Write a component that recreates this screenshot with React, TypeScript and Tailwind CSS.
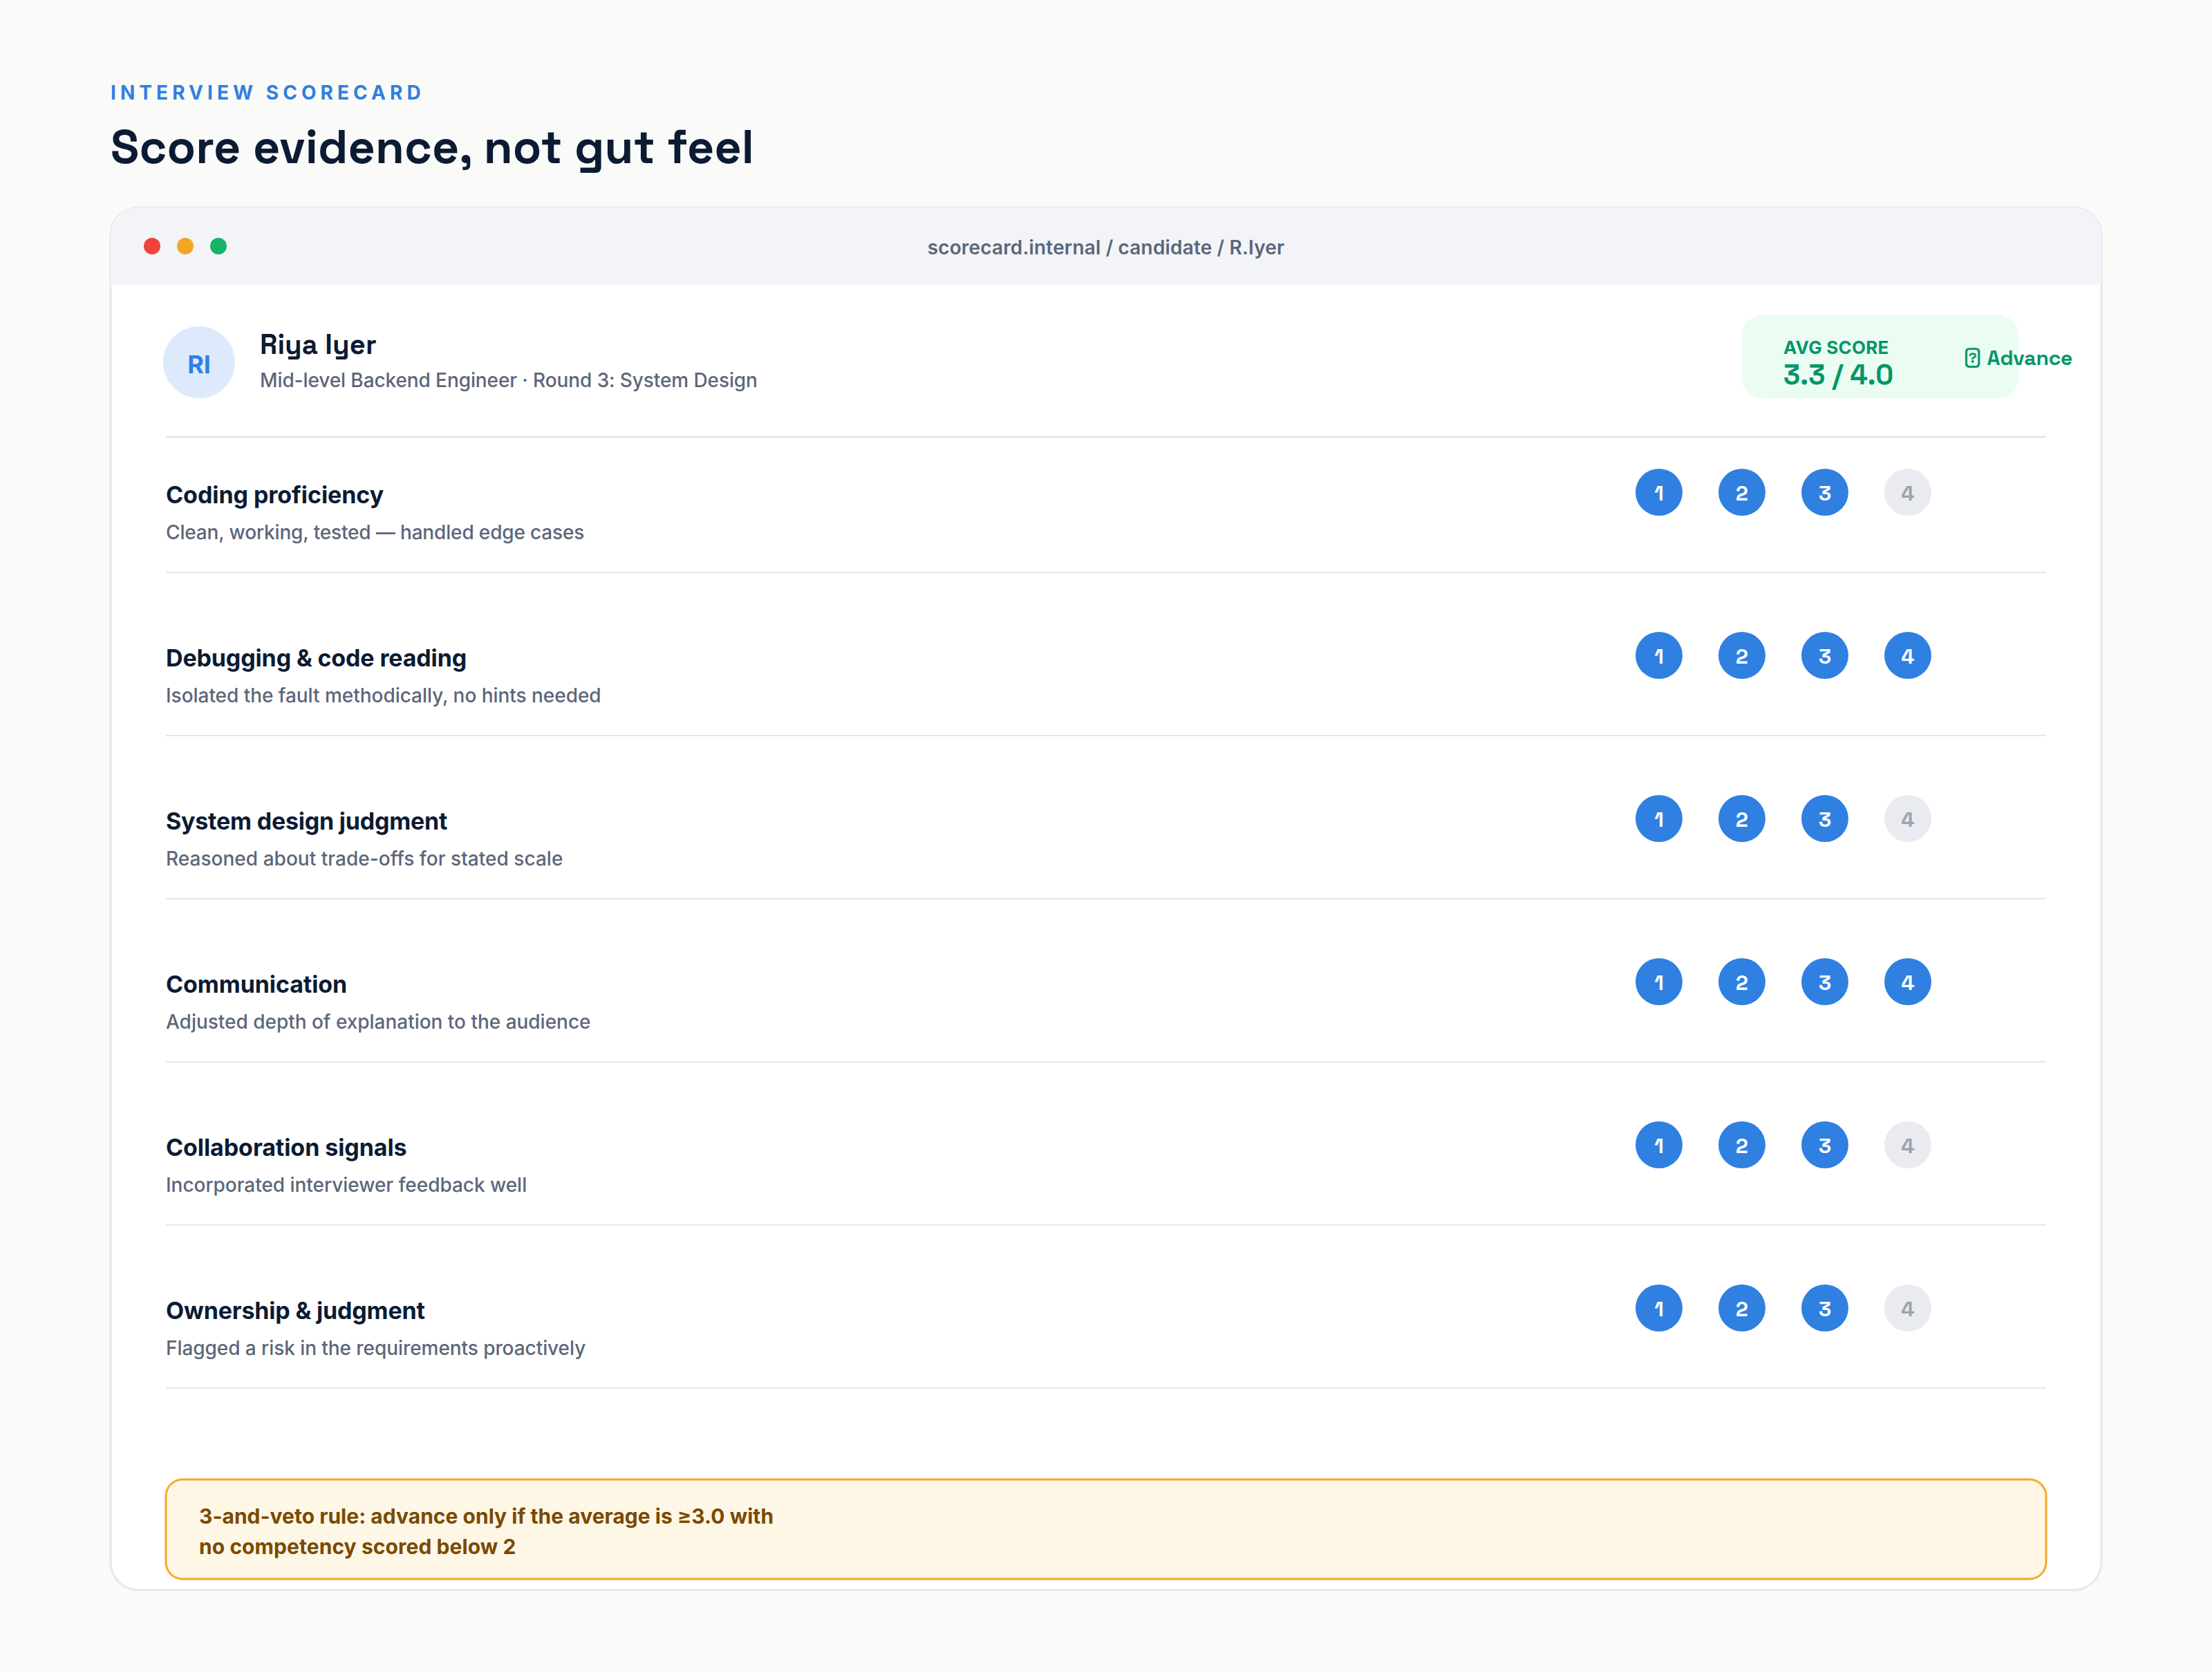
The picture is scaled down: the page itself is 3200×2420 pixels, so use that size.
const DISPLAY = 'font-["Space_Grotesk",Inter,sans-serif]';

type Competency = {
  title: string;
  titleTracking: string;
  note: string;
  noteTracking: string;
  score: number;
};

const competencies: Competency[] = [
  {
    title: 'Coding proficiency',
    titleTracking: 'tracking-[-0.03px]',
    note: 'Clean, working, tested — handled edge cases',
    noteTracking: 'tracking-[-0.08px]',
    score: 3,
  },
  {
    title: 'Debugging & code reading',
    titleTracking: 'tracking-[-0.07px]',
    note: 'Isolated the fault methodically, no hints needed',
    noteTracking: 'tracking-[-0.02px]',
    score: 4,
  },
  {
    title: 'System design judgment',
    titleTracking: 'tracking-[-0.11px]',
    note: 'Reasoned about trade-offs for stated scale',
    noteTracking: 'tracking-[0.012px]',
    score: 3,
  },
  {
    title: 'Communication',
    titleTracking: 'tracking-[-0.05px]',
    note: 'Adjusted depth of explanation to the audience',
    noteTracking: 'tracking-[-0.012px]',
    score: 4,
  },
  {
    title: 'Collaboration signals',
    titleTracking: 'tracking-[-0.04px]',
    note: 'Incorporated interviewer feedback well',
    noteTracking: 'tracking-[-0.02px]',
    score: 3,
  },
  {
    title: 'Ownership & judgment',
    titleTracking: 'tracking-[-0.09px]',
    note: 'Flagged a risk in the requirements proactively',
    noteTracking: 'tracking-[-0.034px]',
    score: 3,
  },
];

function TitleBar() {
  return (
    <div className="relative grid h-14 grid-cols-3 items-center rounded-t-[20px] bg-[#f2f4f8] px-6">
      <div className="flex gap-3">
        <span className="size-3 rounded-full bg-[#f04438]" />
        <span className="size-3 rounded-full bg-[#f5a524]" />
        <span className="size-3 rounded-full bg-[#17b26a]" />
      </div>
      <div className="pt-px text-center text-[14px] leading-[17px] font-semibold tracking-[0.08px] whitespace-nowrap text-[#5b667a]">
        scorecard.internal / candidate / R.Iyer
      </div>
    </div>
  );
}

function Candidate() {
  return (
    <div className="flex h-[109px] items-start justify-between">
      <div className="-ml-0.5 flex gap-[18px] pt-[30px]">
        <div className="flex size-[52px] items-start justify-center rounded-full bg-[#dceafc] pt-[17px] text-[18px] leading-[21px] font-bold text-[#2f80e1]">
          RI
        </div>
        <div>
          <div className={`${DISPLAY} text-[20px] leading-[26px] font-bold tracking-[0.05px] text-[#0b1b33]`}>
            Riya Iyer
          </div>
          <div className="mt-1 text-[14px] leading-[17px] font-medium tracking-[-0.05px] text-[#5b667a]">
            Mid-level Backend Engineer · Round 3: System Design
          </div>
        </div>
      </div>
      <div className="mt-[22px] mr-5 flex h-[60px] w-[200px] items-start rounded-[14px] bg-[#ebfdf3] pl-[30px] text-[#059669]">
        <div className="w-[130px] shrink-0 pt-[15px]">
          <div className="text-[13px] leading-4 font-bold tracking-[0.11px]">AVG SCORE</div>
          <div className={`${DISPLAY} -mt-px text-[20px] leading-[26px] font-bold`}>3.3 / 4.0</div>
        </div>
        <div
          className={`${DISPLAY} shrink-0 pt-[21px] text-[15px] leading-[19px] font-bold tracking-[-0.09px] whitespace-nowrap`}
        >
          {'\u{F0000} Advance'}
        </div>
      </div>
    </div>
  );
}

function ScoreDot({ value, filled }: { value: number; filled: boolean }) {
  return (
    <span
      className={`${DISPLAY} size-[34px] rounded-full pt-2 text-center text-[15px] leading-[19px] font-bold ${
        filled ? 'bg-[#2f80e1] text-white' : 'bg-[#e9ebf0] text-[#9ca3af]'
      }`}
    >
      {value}
    </span>
  );
}

function CompetencyRow({ title, titleTracking, note, noteTracking, score }: Competency) {
  return (
    <div>
      <div className="flex h-[74px] items-start justify-between pr-[83px]">
        <div className="pt-[9px]">
          <div className={`text-[17px] leading-5 font-bold text-[#0b1b33] ${titleTracking}`}>{title}</div>
          <div className={`mt-2 text-[14px] leading-[17px] font-medium text-[#5b667a] ${noteTracking}`}>{note}</div>
        </div>
        <div className="flex gap-[26px]">
          {[1, 2, 3, 4].map((n) => (
            <ScoreDot key={n} value={n} filled={n <= score} />
          ))}
        </div>
      </div>
      <div className="h-0.5 bg-[linear-gradient(#fff_0.5px,#e5e7eb_0.5px,#e5e7eb_1.5px,#fff_1.5px)]" />
    </div>
  );
}

export default function App() {
  return (
    <div className="h-[2420px] w-[3200px] overflow-hidden bg-[#fafaf8]">
      <main className="h-[1210px] w-[1600px] origin-top-left scale-200 bg-[#fafaf8] px-20 pt-[58px] font-[Inter,sans-serif]">
        <div className="text-[14px] leading-[17px] font-bold tracking-[3.03px] text-[#2f80e1]">INTERVIEW SCORECARD</div>
        <h1
          className={`${DISPLAY} mt-2.5 text-[34px] leading-[43px] font-bold tracking-[0.085px] whitespace-nowrap text-[#0b1b33]`}
        >
          Score evidence, not gut feel
        </h1>
        <section className="mt-[22px] h-[1000px] rounded-[20px] bg-white shadow-[0_0_0_0.75px_#e5e7eb,inset_0_0_0_0.75px_#e5e7eb]">
          <TitleBar />
          <div className="px-10">
            <Candidate />
            <div className="h-0.5 bg-[linear-gradient(#f2f3f5_0.5px,#e5e7eb_0.5px,#e5e7eb_1.5px,#f2f3f5_1.5px)]" />
            <div className="flex flex-col gap-[42px] pt-[22px]">
              {competencies.map((c) => (
                <CompetencyRow key={c.title} {...c} />
              ))}
            </div>
            <div className="mt-[65px] h-[72px] rounded-xl bg-[#fff7e6] px-6 pt-[17px] text-[15px] leading-[19px] font-bold text-[#7a4a00] shadow-[0_0_0_0.75px_#f5a524,inset_0_0_0_0.75px_#f5a524]">
              <div className="tracking-[0.01px]">3-and-veto rule: advance only if the average is ≥3.0 with</div>
              <div className="mt-[3px] tracking-[0.035px]">no competency scored below 2</div>
            </div>
          </div>
        </section>
      </main>
    </div>
  );
}
